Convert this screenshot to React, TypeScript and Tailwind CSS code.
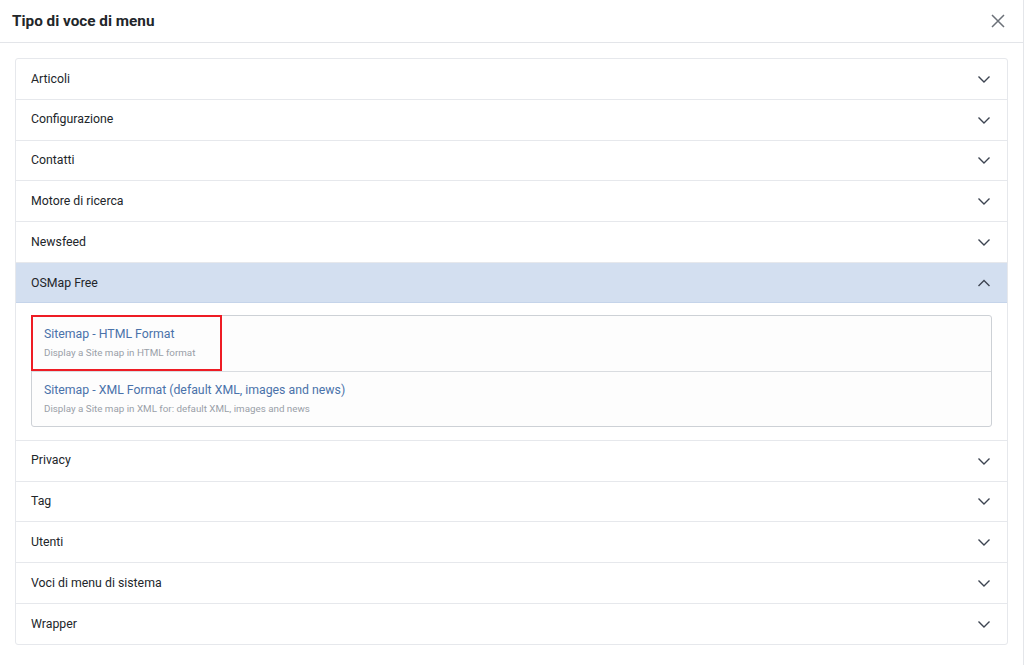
import React, { useState } from 'react';

const GROUPS = [
  'Articoli',
  'Configurazione',
  'Contatti',
  'Motore di ricerca',
  'Newsfeed',
  'OSMap Free',
  'Privacy',
  'Tag',
  'Utenti',
  'Voci di menu di sistema',
  'Wrapper',
];

const ITEMS = [
  { title: 'Sitemap - HTML Format', desc: 'Display a Site map in HTML format', marked: true },
  {
    title: 'Sitemap - XML Format (default XML, images and news)',
    desc: 'Display a Site map in XML for: default XML, images and news',
    marked: false,
  },
];

const Chevron = ({ up }: { up?: boolean }) => (
  <svg width="14" height="14" viewBox="0 0 14 14" fill="none" stroke="#3d4451" strokeWidth="1.4">
    {up ? <path d="M1.5 10 L7 4.5 L12.5 10" /> : <path d="M1.5 4.5 L7 10 L12.5 4.5" />}
  </svg>
);

export default function App() {
  const [open, setOpen] = useState<string | null>('OSMap Free');

  return (
    <div
      className="w-[1024px] h-[665px] bg-white border-r border-[#e4e6ea] text-[#22262a] overflow-hidden"
      style={{ fontFamily: 'Roboto, "Liberation Sans", sans-serif' }}
    >
      <div className="h-[43px] flex items-center justify-between pl-3 pr-[18px] border-b border-[#e3e5e9]">
        <h3 className="text-[15.3px] font-bold text-[#22262a]">Tipo di voce di menu</h3>
        <button className="text-[#6b7078]">
          <svg width="14" height="14" viewBox="0 0 14 14" stroke="currentColor" strokeWidth="1.5">
            <path d="M1 1 L13 13 M13 1 L1 13" />
          </svg>
        </button>
      </div>

      <div className="pt-[15px] pl-[15px] pr-[15px]">
        <div className="border border-[#e6e8ec] rounded-[3px]">
          {GROUPS.map((name, i) => {
            const isOpen = open === name;
            return (
              <div key={name} className={i > 0 ? 'border-t border-[#e6e8ec]' : ''}>
                <button
                  onClick={() => setOpen(isOpen ? null : name)}
                  className={`w-full h-[39.8px] flex items-center justify-between pl-[15px] pr-[16px] text-[12.3px] text-left ${
                    isOpen ? 'bg-[#d3dff0] shadow-[inset_0_-1px_0_#c5d4ea]' : ''
                  }`}
                >
                  <span>{name}</span>
                  <Chevron up={isOpen} />
                </button>
                {isOpen && (
                  <div className="pt-[12px] pb-[13px] px-[15px]">
                    <div className="border border-[#cdd1d6] rounded-[3px] bg-[#fdfdfd]">
                      {ITEMS.map((item, j) => (
                        <div
                          key={item.title}
                          className={`relative h-[55px] pl-[12px] pt-[10px] ${j > 0 ? 'border-t border-[#d9dce0]' : ''}`}
                        >
                          {item.marked && (
                            <div className="absolute -left-px -top-px w-[191px] h-[56px] border-2 border-[#ee1c24]" />
                          )}
                          <div className="text-[12.3px] text-[#4a72aa] leading-[16px]">{item.title}</div>
                          <div className="text-[9.8px] text-[#9aa0a8] leading-[13px] mt-[4px]">{item.desc}</div>
                        </div>
                      ))}
                    </div>
                  </div>
                )}
              </div>
            );
          })}
        </div>
      </div>
    </div>
  );
}
